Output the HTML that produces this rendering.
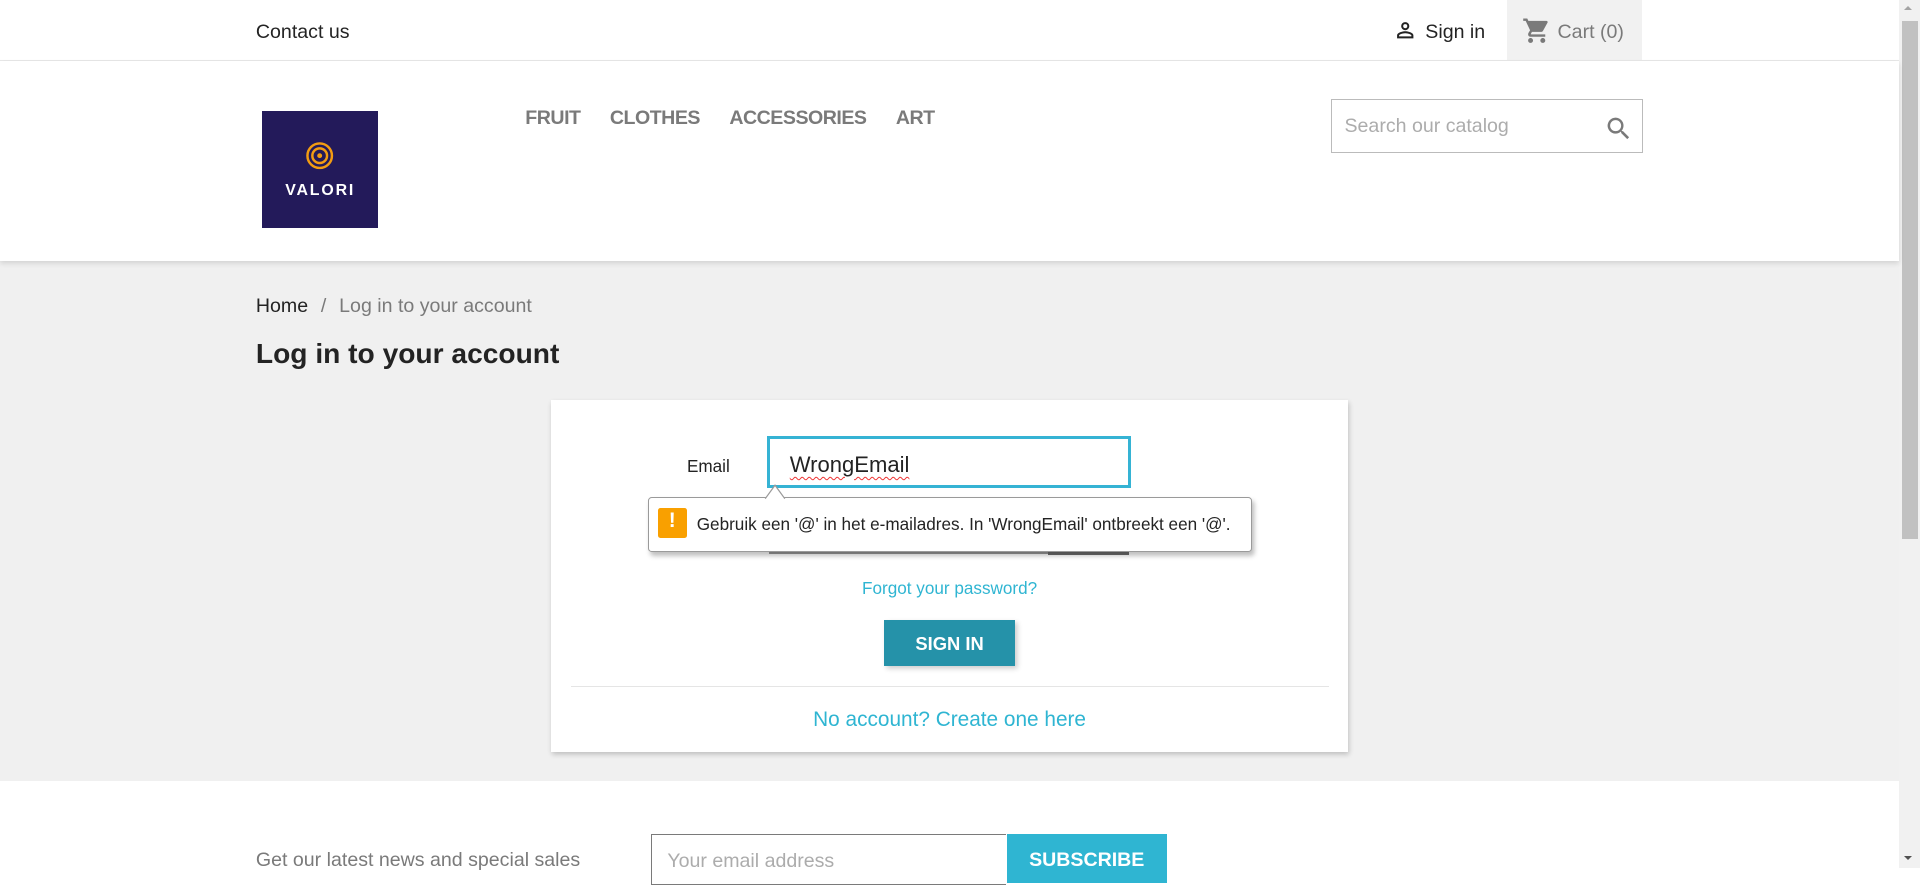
<!DOCTYPE html>
<html><head><meta charset="utf-8"><style>
html{zoom:1.22449}
body{margin:0;width:1568px;height:709px;overflow:hidden;position:relative;font-family:"Liberation Sans",sans-serif;background:#fff;color:#232323}
.a{position:absolute;white-space:nowrap}
</style></head><body>
<div class="a" style="left:0;top:0;width:1551px;height:49px;border-bottom:1px solid #e8e8e8;background:#fff"></div>
<div class="a" style="left:209px;top:17px;font-size:16px">Contact us</div>
<svg class="a" style="left:1138px;top:15px" width="20" height="20" viewBox="0 0 24 24"><path fill="#232323" d="M12 4a4 4 0 1 0 0 8 4 4 0 0 0 0-8zm0 2a2 2 0 1 1 0 4 2 2 0 0 1 0-4zm0 7c-2.7 0-8 1.3-8 4v3h16v-3c0-2.7-5.3-4-8-4zm0 2c3 0 6 1.4 6 2v1H6v-1c0-.6 3-2 6-2z"/></svg>
<div class="a" style="left:1164px;top:17px;font-size:16px">Sign in</div>
<div class="a" style="left:1231px;top:0;width:110px;height:49px;background:#f1f1f1"></div>
<svg class="a" style="left:1243px;top:13px" width="24" height="24" viewBox="0 0 24 24"><path fill="#7a7a7a" d="M7 18c-1.1 0-2 .9-2 2s.9 2 2 2 2-.9 2-2-.9-2-2-2zM1 2v2h2l3.6 7.6-1.4 2.4c-.1.3-.2.6-.2 1 0 1.1.9 2 2 2h12v-2H7.4c-.1 0-.2-.1-.2-.2v-.1l.9-1.7h7.4c.8 0 1.4-.4 1.700-1l3.6-6.5c.1-.2.2-.3.2-.5 0-.6-.5-1-1-1H5.2l-.9-2H1zm16 16c-1.1 0-2 .9-2 2s.9 2 2 2 2-.9 2-2-.9-2-2-2z"/></svg>
<div class="a" style="left:1272px;top:17px;font-size:16px;color:#7a7a7a">Cart (0)</div>
<div class="a" style="left:0;top:50px;width:1551px;height:163px;background:#fff;box-shadow:0 2px 4px rgba(0,0,0,.12);z-index:2"></div>
<div class="a" style="left:214px;top:91px;width:95px;height:95px;background:#231a5a;z-index:3">
<svg class="a" style="left:35px;top:24px" width="24" height="24" viewBox="0 0 24 24"><circle cx="12" cy="12" r="10" fill="none" stroke="#f39c12" stroke-width="2"/><circle cx="12" cy="12" r="6" fill="none" stroke="#f39c12" stroke-width="2"/><circle cx="12" cy="12" r="2" fill="#f39c12"/></svg>
<div class="a" style="left:0;width:95px;top:58px;text-align:center;color:#fff;font-size:13px;font-weight:bold;letter-spacing:1.5px">VALORI</div></div>
<div class="a" style="left:429px;top:87px;font-size:16px;font-weight:bold;color:#7a7a7a;z-index:3;letter-spacing:-0.4px">FRUIT<span style="margin-left:24px">CLOTHES</span><span style="margin-left:24px">ACCESSORIES</span><span style="margin-left:24px">ART</span></div>
<div class="a" style="left:1087px;top:81px;width:253px;height:42px;border:1px solid #bbb;z-index:3;background:#fff"></div>
<div class="a" style="left:1098px;top:94px;font-size:16px;color:#acacac;z-index:4">Search our catalog</div>
<svg class="a" style="left:1310px;top:93px;z-index:4" width="24" height="24" viewBox="0 0 24 24"><path fill="#7a7a7a" d="M15.5 14h-.8l-.3-.3A6.5 6.5 0 1 0 9.5 16a6.5 6.5 0 0 0 4.2-1.6l.3.3v.8l5 5 1.5-1.5-5-5zm-6 0C7 14 5 12 5 9.5S7 5 9.5 5 14 7 14 9.5 12 14 9.5 14z"/></svg>
<div class="a" style="left:0;top:213px;width:1551px;height:425px;background:#f0f0f0"></div>
<div class="a" style="left:209px;top:241px;font-size:16px">Home <span style="color:#7a7a7a;margin:0 6px">/</span> <span style="color:#7a7a7a">Log in to your account</span></div>
<div class="a" style="left:209px;top:276px;font-size:23px;font-weight:bold">Log in to your account</div>
<div class="a" style="left:450px;top:327px;width:651px;height:287px;background:#fff;box-shadow:1px 2px 4px rgba(0,0,0,.2)"></div>
<div class="a" style="left:561px;top:372px;font-size:14px">Email</div>
<div class="a" style="left:626px;top:356px;width:293px;height:38px;border:3px solid #35b3d4;background:#fff"></div>
<div class="a" style="left:645px;top:369px;font-size:18px;text-decoration:underline wavy #e33;text-decoration-thickness:1px;text-underline-offset:3px">WrongEmail</div>
<div class="a" style="left:628px;top:430px;width:228px;height:21px;border-bottom:2px solid #999;background:#fff"></div>
<div class="a" style="left:856px;top:430px;width:66px;height:23px;background:#6b6b6b"></div>
<div class="a" style="left:529px;top:406px;width:492px;height:43px;border:1px solid #9a9a9a;border-radius:3px;background:#fff;box-shadow:2px 3px 4px rgba(0,0,0,.25)"></div>
<svg class="a" style="left:624px;top:395px" width="20" height="13"><path d="M1 12 L9 1 L17 12" fill="#fff" stroke="#9a9a9a"/></svg>
<div class="a" style="left:537px;top:415px;width:24px;height:24px;background:#f9a000;border-radius:2px;color:#fff;font-weight:bold;font-size:17px;text-align:center;line-height:22px">!</div>
<div class="a" style="left:569px;top:420px;font-size:14px">Gebruik een '@' in het e-mailadres. In 'WrongEmail' ontbreekt een '@'.</div>
<div class="a" style="left:450px;width:651px;text-align:center;top:472px;font-size:14px;color:#2fb5d2">Forgot your password?</div>
<div class="a" style="left:722px;top:506px;width:107px;height:38px;background:#2592a9;color:#fff;font-weight:bold;font-size:15px;text-align:center;line-height:39px;box-shadow:2px 2px 4px rgba(0,0,0,.2)">SIGN IN</div>
<div class="a" style="left:466px;top:560px;width:619px;height:1px;background:#e5e5e5"></div>
<div class="a" style="left:450px;width:651px;text-align:center;top:578px;font-size:17px;color:#2fb5d2">No account? Create one here</div>
<div class="a" style="left:209px;top:693px;font-size:16px;color:#7a7a7a">Get our latest news and special sales</div>
<div class="a" style="left:532px;top:681px;width:289px;height:40px;border:1px solid #7a7a7a;border-right:none;background:#fff"></div>
<div class="a" style="left:545px;top:694px;font-size:16px;color:#acacac">Your email address</div>
<div class="a" style="left:822px;top:681px;width:131px;height:40px;background:#2fb5d2;color:#fff;font-weight:bold;font-size:16px;text-align:center;line-height:44px">SUBSCRIBE</div>
<div class="a" style="left:1551px;top:0;width:17px;height:709px;background:#f1f1f1"></div>
<div class="a" style="left:1553px;top:17px;width:13px;height:423px;background:#c1c1c1"></div>
<div class="a" style="left:1555px;top:5px;width:0;height:0;border-left:4px solid transparent;border-right:4px solid transparent;border-bottom:4px solid #a3a3a3"></div>
<div class="a" style="left:1555px;top:699px;width:0;height:0;border-left:4px solid transparent;border-right:4px solid transparent;border-top:4px solid #505050"></div>
</body></html>
